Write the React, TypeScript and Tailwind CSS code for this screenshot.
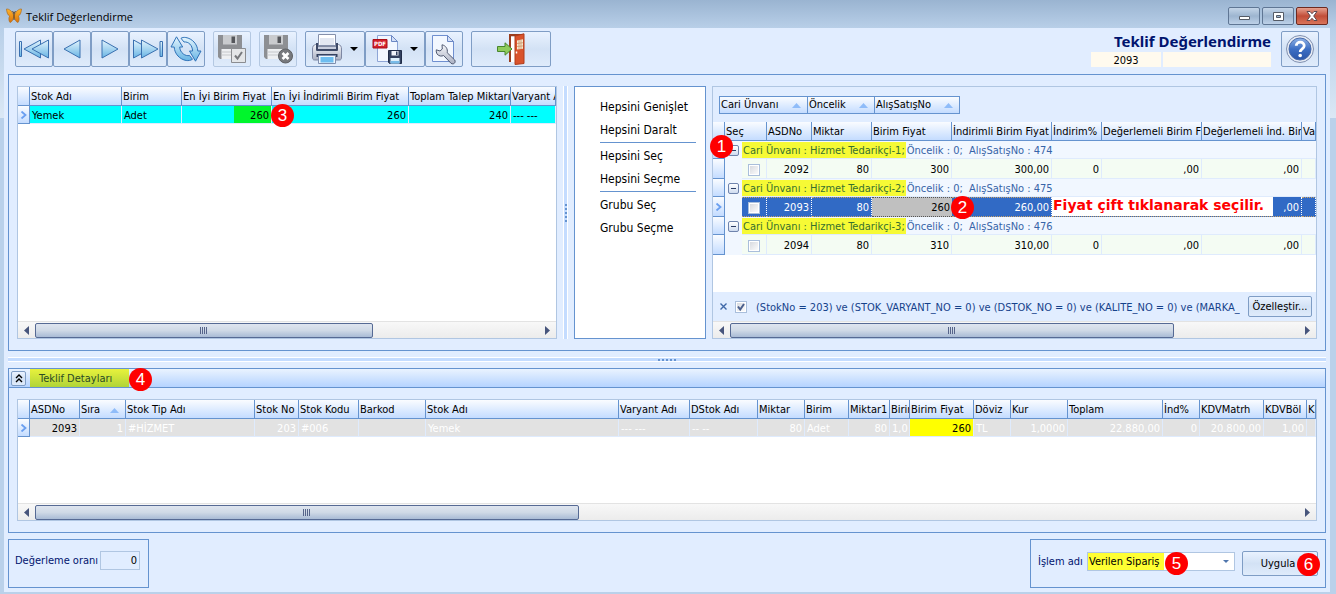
import { useState } from 'react'
import type { ReactNode } from 'react'
import clsx from 'clsx'

const BUTTON = 'border border-[#7f9dc5] rounded-xs bg-linear-to-b from-[#e9f2ff] via-[#d3e2f5] via-50% to-[#dfebfb]'
const HEAD = 'bg-linear-to-b from-[#fafcff] to-[#c4dcff]'

function Badge({ children, className }: { children: ReactNode; className: string }) {
  return (
    <span
      className={clsx(
        'absolute z-10 flex size-[23px] items-center justify-center rounded-full bg-[#fe0000] font-[Liberation_Sans,sans-serif] text-[17px] leading-none text-white',
        className,
      )}
    >
      {children}
    </span>
  )
}

/* ---------- icons ---------- */

function Gradients() {
  return (
    <svg className="absolute size-0" aria-hidden="true">
      <defs>
        <linearGradient id="sky" x1="0" y1="0" x2="0" y2="1">
          <stop offset="0" stopColor="#e4f5fd" />
          <stop offset="1" stopColor="#67b4e4" />
        </linearGradient>
        <linearGradient id="steel" x1="0" y1="0" x2="0" y2="1">
          <stop offset="0" stopColor="#f5f6fa" />
          <stop offset="1" stopColor="#aab0c2" />
        </linearGradient>
        <linearGradient id="ball" x1="0" y1="0" x2="0" y2="1">
          <stop offset="0" stopColor="#8fb2e6" />
          <stop offset="0.5" stopColor="#3d6fc4" />
          <stop offset="1" stopColor="#2a55a8" />
        </linearGradient>
        <linearGradient id="wing" x1="0" y1="0" x2="0" y2="1">
          <stop offset="0" stopColor="#ffb52e" />
          <stop offset="1" stopColor="#d9730b" />
        </linearGradient>
      </defs>
    </svg>
  )
}

function ButterflyIcon() {
  return (
    <svg width="16" height="16" viewBox="0 0 16 16">
      <path d="M7.6 7C6 3 3 .8.5 1c.2 3 1 6 3.2 7.2C2.500 9.500 2.600 13 4 14.500 6 14 7.300 11.500 7.700 9z" fill="url(#wing)" stroke="#a8620f" strokeWidth=".6" />
      <path d="M8.400 7C10 3 13 .8 15.500 1c-.2 3-1 6-3.200 7.200C13.500 9.500 13.400 13 12 14.500 10 14 8.700 11.500 8.300 9z" fill="url(#wing)" stroke="#a8620f" strokeWidth=".6" />
      <path d="M8 5v7M8 5.500L6.500 3M8 5.500L9.500 3" stroke="#5a3a18" fill="none" strokeWidth=".9" />
    </svg>
  )
}

function FirstIcon() {
  return (
    <svg width="30" height="20" viewBox="0 0 30 20" fill="url(#sky)" stroke="#3a70b0">
      <path d="M.5 2.500h2v15h-2z" />
      <path d="M21.500 1v18L5 10z" />
      <path d="M29.500 1v18L13 10z" />
    </svg>
  )
}

function PrevIcon() {
  return (
    <svg width="18" height="20" viewBox="0 0 18 20">
      <path d="M17 1v18L1 10z" fill="url(#sky)" stroke="#3a70b0" />
    </svg>
  )
}

function NextIcon() {
  return (
    <svg width="18" height="20" viewBox="0 0 18 20">
      <path d="M1 1v18l16-9z" fill="url(#sky)" stroke="#3a70b0" />
    </svg>
  )
}

function LastIcon() {
  return (
    <svg width="30" height="20" viewBox="0 0 30 20" fill="url(#sky)" stroke="#3a70b0">
      <path d="M.5 1v18L17 10z" />
      <path d="M8.500 1v18L25 10z" />
      <path d="M27 2.500h2.500v15H27z" />
    </svg>
  )
}

function RefreshIcon() {
  return (
    <svg width="32" height="26" viewBox="0 0 32 26" fill="url(#sky)" stroke="#2f72b8" strokeLinejoin="round">
      <path d="M6.500.8L1 11h3.200c.3 7 5.800 12.500 12 13.500 2.200.3 4.300 0 6.300-1.200l-3-3.800c-4 1-9.500-2.500-9.800-8.500h3z" />
      <path d="M25.500 25.200L31 15h-3.200C27.500 8 22 2.500 15.800 1.500c-2.200-.3-3.300 0-4.800.8l3 3.700c4.500-.5 8.300 3 8.600 9h-3.100z" />
    </svg>
  )
}

function Disk({ badge }: { badge: 'check' | 'cross' }) {
  return (
    <svg width="30" height="30" viewBox="0 0 30 30">
      <path d="M1 1h24v24H3l-2-2z" fill="#8d8f93" />
      <path d="M6 1h14v9.500H6z" fill="#c9cbce" />
      <path d="M14.500 2.500h3.500v6.500h-3.500z" fill="#54565b" />
      <path d="M4.500 15h17v10h-17z" fill="#eef0f2" />
      <path d="M4.500 18h17M4.500 21h17" stroke="#c6c8cb" />
      {badge === 'check' ? (
        <>
          <path d="M14.500 14.500h14v14h-14z" fill="#e4e6e8" stroke="#8b8d91" />
          <path d="M18 21.500l2.500 3 4.500-6.500" fill="none" stroke="#77797d" strokeWidth="2" />
        </>
      ) : (
        <>
          <circle cx="22.500" cy="22" r="7" fill="#77797d" stroke="#5d5f63" />
          <path d="M19.500 19l6 6m0-6l-6 6" stroke="#fff" strokeWidth="2.600" />
        </>
      )}
    </svg>
  )
}

function PrinterIcon() {
  return (
    <svg width="30" height="31" viewBox="0 0 30 31">
      <path d="M3.500 10.500c-2 .5-3 2-3 4.500v8c0 2 .5 3 2 3h25c1.500 0 2-1 2-3v-8c0-2.500-1-4-3-4.500z" fill="url(#steel)" stroke="#7d87a3" />
      <path d="M4 9h22v6.500c0 1-.5 1.500-1.500 1.500h-19C4.500 17 4 16.500 4 15.500z" fill="#3d4966" />
      <path d="M6.500.5h17v11h-17z" fill="#fff" stroke="#8590ab" />
      <path d="M8 4h14v7H8z" fill="#e3e8f2" />
      <path d="M6 12.500h18V15H6z" fill="#c8cede" />
      <path d="M4.500 20h21v3h-21z" fill="#35425f" />
      <path d="M6.500 21.500h17v8h-17z" fill="#eef7fd" stroke="#7f8eae" />
      <path d="M8.500 23h13v5.500h-13z" fill="#6dbdf0" />
    </svg>
  )
}

function PdfIcon() {
  return (
    <svg width="30" height="31" viewBox="0 0 30 31">
      <path d="M5.500 1.500h14l6 6v20h-20z" fill="#f2f7ff" stroke="#8ea5d6" />
      <path d="M19.500 1.500v6h6z" fill="#d4e0f7" stroke="#6c88c4" />
      <path d="M1 5.500h14v8.500H1z" fill="#d3202a" stroke="#a90f18" />
      <text x="8" y="12" textAnchor="middle" fontFamily="DejaVu Sans Condensed, sans-serif" fontSize="6" fontWeight="700" fill="#fff">PDF</text>
      <path d="M16.500 16.500h13v13h-12l-1-1z" fill="#33415f" stroke="#202c48" />
      <path d="M19.500 17h7v4.500h-7z" fill="#f1f4fa" />
      <path d="M24 17.500h1.500V21H24z" fill="#33415f" />
      <path d="M18.500 24h9v5.500h-9z" fill="#ddf0fc" />
      <path d="M18.500 27h9v2.500h-9z" fill="#78bbe8" />
    </svg>
  )
}

function ServiceIcon() {
  return (
    <svg width="26" height="31" viewBox="0 0 26 31">
      <path d="M1.500 1.500h15l6 6v20h-21z" fill="#f2f7ff" stroke="#6f8fd0" />
      <path d="M16.500 1.500v6h6z" fill="#d4e0f7" stroke="#6c88c4" />
      <path
        d="M11 10.800l.3 4.200-2.300 2-3.700-1.200c-.5 3 1 5.700 4 6.200 1.200.2 2.300 0 3.300-.5l7.400 7.800c2.500 1.700 5.200-.8 3.700-3.300l-7.500-7.300c.8-3.800-1.500-7.200-5.200-7.900z"
        fill="url(#steel)"
        stroke="#4f5870"
      />
    </svg>
  )
}

function DoorIcon() {
  return (
    <svg width="30" height="32" viewBox="0 0 30 32">
      <path d="M13 1h14v2.500H15V29h-2z" fill="#9a3d1e" />
      <path d="M15 3.500h9V29h-9z" fill="#fff" />
      <path d="M19 3L28 .8v29.700L19 31.500z" fill="#d9532c" stroke="#b03c1b" />
      <path d="M21 7.500l6-1.200v9.500l-6 .7z" fill="#f5ead0" />
      <path d="M23 7v9.500M25 6.500V16M21 10.500l6-.8M21 13.500l6-.6" stroke="#c98a5c" strokeWidth=".7" />
      <path d="M1.500 13.500H9V9.800l7 6.200-7 6.200v-3.700H1.500z" fill="#8fcb5b" stroke="#47862c" />
      <path d="M20.500 18.500v2" stroke="#fff" strokeWidth="1.500" />
    </svg>
  )
}

function HelpIcon() {
  return (
    <svg width="30" height="30" viewBox="0 0 30 30">
      <circle cx="15" cy="15" r="13.500" fill="#e6ebf4" stroke="#8090b0" />
      <circle cx="15" cy="15" r="11" fill="url(#ball)" stroke="#4a6cab" />
      <path d="M11.200 11.800c.2-5 8.300-4.700 8 .2-.2 2.800-4 3-4 6" fill="none" stroke="#fff" strokeWidth="2.800" />
      <circle cx="15.200" cy="21.500" r="1.800" fill="#fff" />
    </svg>
  )
}

function RowMarker() {
  return (
    <svg width="8" height="8" viewBox="0 0 8 8" className="mx-auto block">
      <path d="M1.500.5L5.500 4l-4 3.500" fill="none" stroke="#6a9ff0" strokeWidth="1.800" />
    </svg>
  )
}

function SortMark() {
  return (
    <svg width="9" height="5" viewBox="0 0 9 5" className="shrink-0">
      <path d="M4.500 0L9 5H0z" fill="#8fbcf9" />
    </svg>
  )
}

function DropArrow() {
  return (
    <svg width="8" height="4" viewBox="0 0 8 4">
      <path d="M0 0h8L4 4z" fill="#000" />
    </svg>
  )
}

/* ---------- shared parts ---------- */

function ToolButton({ label, wide, disabled, children }: { label: string; wide?: string; disabled?: boolean; children: ReactNode }) {
  return (
    <button
      type="button"
      aria-label={label}
      disabled={disabled}
      className={clsx(
        'flex h-9 items-center justify-center rounded-xs border bg-linear-to-b from-[#e9f2ff] via-[#d3e2f5] via-50% to-[#dfebfb]',
        disabled ? 'border-[#b4c8e2]' : 'border-[#7f9dc5]',
        wide ?? 'w-[38px]',
      )}
    >
      {children}
    </button>
  )
}

function ScrollBar({ thumb }: { thumb: string }) {
  return (
    <div className="flex h-[17px] shrink-0 items-center border-t border-[#e3e3e3] bg-linear-to-b from-[#f8f8f8] to-[#ececec]">
      <button type="button" aria-label="Sola kaydır" className="flex w-[17px] shrink-0 justify-center">
        <svg width="5" height="9" viewBox="0 0 5 9"><path d="M5 0v9L0 4.500z" fill="#47557c" /></svg>
      </button>
      <div className="grow">
        <div
          className={clsx(
            'flex h-[15px] items-center justify-center gap-px rounded-xs border border-[#566a94] bg-linear-to-b from-[#dfe5ef] via-[#cfd9e6] via-50% to-[#a9bbd5]',
            thumb,
          )}
        >
          {[0, 1, 2, 3].map((i) => (
            <span key={i} className="h-[7px] w-px bg-[#56648a]" />
          ))}
        </div>
      </div>
      <button type="button" aria-label="Sağa kaydır" className="flex w-[17px] shrink-0 justify-center">
        <svg width="5" height="9" viewBox="0 0 5 9"><path d="M0 0v9l5-4.500z" fill="#47557c" /></svg>
      </button>
    </div>
  )
}

function Th({ children, sorted, span }: { children?: ReactNode; sorted?: boolean; span?: number }) {
  return (
    <th
      colSpan={span}
      className={clsx('h-[19px] overflow-hidden border-r border-b border-[#6593cf] p-0 pt-[2px] pl-px text-left font-normal whitespace-nowrap', HEAD)}
    >
      {sorted ? (
        <span className="flex items-center justify-between pr-[6px]">
          {children}
          <SortMark />
        </span>
      ) : (
        children
      )}
    </th>
  )
}

function Marker({ active }: { active?: boolean }) {
  return (
    <td className={clsx('border-r border-b border-[#6593cf] p-0', HEAD)}>{active && <RowMarker />}</td>
  )
}

function Columns({ widths }: { widths: string[] }) {
  return (
    <colgroup>
      {widths.map((w, i) => (
        <col key={i} className={w} />
      ))}
      <col />
    </colgroup>
  )
}

const TABLE = 'w-full table-fixed border-separate border-spacing-0'
const CELL = 'overflow-hidden border-r border-b border-[#dfebfd] px-[2px] pt-[2px] pb-0 whitespace-nowrap'

/* ---------- demand grid ---------- */

function DemandGrid() {
  const widths = ['w-[12px]', 'w-[92px]', 'w-[60px]', 'w-[90px]', 'w-[137px]', 'w-[102px]']
  return (
    <div className="relative flex w-[540px] shrink-0 flex-col border border-[#b0c6e2] bg-white">
      <div className="grow overflow-hidden">
        <table className={TABLE}>
          <Columns widths={widths} />
          <thead>
            <tr>
              <Th />
              <Th>Stok Adı</Th>
              <Th>Birim</Th>
              <Th>En İyi Birim Fiyat</Th>
              <Th>En İyi İndirimli Birim Fiyat</Th>
              <Th>Toplam Talep Miktarı</Th>
              <Th>Varyant Adı</Th>
            </tr>
          </thead>
          <tbody>
            <tr className="h-[18px] bg-[#00ffff]">
              <Marker active />
              <td className={CELL}>Yemek</td>
              <td className={CELL}>Adet</td>
              <td className={clsx(CELL, 'bg-linear-to-r from-[#00ffff] from-58% to-[#00f62c] to-58% text-right')}>260</td>
              <td className={clsx(CELL, 'text-right')}>260</td>
              <td className={clsx(CELL, 'text-right')}>240</td>
              <td className={CELL}>--- ---</td>
            </tr>
          </tbody>
        </table>
      </div>
      <ScrollBar thumb="w-[67%]" />
      <Badge className="top-[17px] left-[253px]">3</Badge>
    </div>
  )
}

/* ---------- selection menu ---------- */

function SelectionMenu() {
  const groups = [
    ['Hepsini Genişlet', 'Hepsini Daralt'],
    ['Hepsini Seç', 'Hepsini Seçme'],
    ['Grubu Seç', 'Grubu Seçme'],
  ]
  return (
    <nav className="mr-[6px] ml-[6px] flex w-[132px] shrink-0 flex-col border border-[#6593cf] bg-white pt-[8px] pr-[9px] pl-[25px] text-[12px]">
      {groups.map((items, i) => (
        <div key={items[0]} className={clsx('flex flex-col pb-px', i < 2 && 'mb-px border-b border-[#6593cf]')}>
          {items.map((item) => (
            <button key={item} type="button" className="h-[23px] text-left whitespace-nowrap">
              {item}
            </button>
          ))}
        </div>
      ))}
    </nav>
  )
}

/* ---------- offer grid ---------- */

const offers = [
  { firm: 'Hizmet Tedarikçi-1', no: 474, asd: 2092, price: '300', net: '300,00' },
  { firm: 'Hizmet Tedarikçi-2', no: 475, asd: 2093, price: '260', net: '260,00' },
  { firm: 'Hizmet Tedarikçi-3', no: 476, asd: 2094, price: '310', net: '310,00' },
]

function OfferRows({ offer, selected }: { offer: (typeof offers)[number]; selected: boolean }) {
  const [checked, setChecked] = useState(false)
  const tone = selected
    ? 'border-t border-dotted border-r-white border-y-[#c9a36a] bg-[#316ac5] text-white'
    : 'border-[#dfebfd] bg-[#f4fcf3]'
  const cell = clsx('overflow-hidden border-r border-b px-[2px] pt-[2px] pb-0 text-right whitespace-nowrap', tone)
  return (
    <>
      <tr className="h-[18px]">
        <Marker />
        <td className="bg-[#f1f7ff] p-0">
          <button
            type="button"
            aria-label="Grubu daralt"
            className="ml-[3px] flex size-[11px] items-center justify-center rounded-xs border border-[#6f84ad] bg-linear-to-b from-white to-[#cfdcf0]"
          >
            <span className="h-px w-[5px] bg-[#2b3c63]" />
          </button>
        </td>
        <td colSpan={9} className="border-b border-[#dfebfd] bg-[#f1f7ff] p-0 whitespace-nowrap text-[#3764a8]">
          <span className="inline-block h-[16px] bg-[#f6fa35] pr-px pl-px leading-[18px] text-[#36702f]">Cari Ünvanı : {offer.firm};</span>
          <span className="ml-px">Öncelik : 0;&nbsp; AlışSatışNo : {offer.no}</span>
        </td>
      </tr>
      <tr className="h-[20px]">
        <Marker active={selected} />
        <td className="bg-[#f1f7ff] p-0" />
        <td className={cell}>
          <input
            type="checkbox"
            aria-label={`Seç ${offer.asd}`}
            checked={checked}
            onChange={(e) => setChecked(e.target.checked)}
            className="mx-auto block size-[12px] appearance-none border border-[#a9bedb] bg-linear-to-br from-[#d4d6dc] to-white ring-1 ring-white ring-inset checked:bg-[#316ac5]"
          />
        </td>
        <td className={cell}>{offer.asd}</td>
        <td className={cell}>80</td>
        <td className={selected ? 'border-y border-dotted border-[#555] bg-[#c0c0c0] px-[2px] pt-[2px] pb-0 text-right' : cell}>{offer.price}</td>
        <td className={cell}>{offer.net}</td>
        {selected ? (
          <td colSpan={3} className="border-r border-b border-dotted border-r-white border-b-[#c9a36a] bg-[#316ac5] p-0 pr-[2px] text-white">
            <div className="flex h-[19px] items-center justify-between">
              <strong className="h-full w-[221px] bg-white pl-px font-[DejaVu_Sans,sans-serif] text-[14px] leading-[16px] font-bold whitespace-nowrap text-[#f00]">
                Fiyat çift tıklanarak seçilir.
              </strong>
              <span className="pt-[2px]">,00</span>
            </div>
          </td>
        ) : (
          <>
            <td className={cell}>0</td>
            <td className={cell}>,00</td>
            <td className={cell}>,00</td>
          </>
        )}
        <td className={cell} />
      </tr>
    </>
  )
}

function OfferGrid() {
  const widths = ['w-[12px]', 'w-[17px]', 'w-[25px]', 'w-[45px]', 'w-[60px]', 'w-[80px]', 'w-[100px]', 'w-[50px]', 'w-[100px]', 'w-[100px]']
  return (
    <div className="relative min-w-0 grow basis-0">
      <div className="flex h-full flex-col border border-[#b0c6e2] bg-white">
        <div className="flex h-[35px] shrink-0 items-center bg-[#e1edff] pl-[6px]">
          <div className="flex border border-[#6593cf]">
            <button type="button" className={clsx('flex h-[16px] w-[88px] items-center justify-between border-r border-[#6593cf] pt-px pr-[6px] pl-px', HEAD)}>Cari Ünvanı <SortMark /></button>
            <button type="button" className={clsx('flex h-[16px] w-[67px] items-center justify-between border-r border-[#6593cf] pt-px pr-[6px] pl-px', HEAD)}>Öncelik <SortMark /></button>
            <button type="button" className={clsx('flex h-[16px] w-[84px] items-center justify-between pt-px pr-[6px] pl-px', HEAD)}>AlışSatışNo <SortMark /></button>
          </div>
        </div>
        <div className="grow overflow-hidden">
          <table className={TABLE}>
            <Columns widths={widths} />
            <thead>
              <tr>
                <Th />
                <Th span={2}>Seç</Th>
                <Th>ASDNo</Th>
                <Th>Miktar</Th>
                <Th>Birim Fiyat</Th>
                <Th>İndirimli Birim Fiyat</Th>
                <Th>İndirim%</Th>
                <Th>Değerlemeli Birim Fiy</Th>
                <Th>Değerlemeli İnd. Biri</Th>
                <Th>Va</Th>
              </tr>
            </thead>
            <tbody>
              {offers.map((offer) => (
                <OfferRows key={offer.asd} offer={offer} selected={offer.asd === 2093} />
              ))}
            </tbody>
          </table>
        </div>
        <div className="flex h-[29px] shrink-0 items-center bg-[#e1edff] pr-[4px] pl-[6px] text-[#15428b]">
          <button type="button" aria-label="Filtreyi kapat" className="shrink-0">
            <svg width="9" height="9" viewBox="0 0 9 9"><path d="M1.500 1.500l6 6m0-6l-6 6" stroke="#3f68a8" strokeWidth="1.400" /></svg>
          </button>
          <label className="ml-[7px] flex min-w-0 grow items-center">
            <span className="relative flex shrink-0">
              <input type="checkbox" defaultChecked className="peer size-[12px] appearance-none border border-[#a9bedb] bg-linear-to-br from-[#d4d6dc] to-white ring-1 ring-white ring-inset" />
              <svg width="12" height="12" viewBox="0 0 12 12" className="pointer-events-none absolute inset-0 hidden peer-checked:block">
                <path d="M3 5.500l2.200 3L9 3" fill="none" stroke="#4b5f8c" strokeWidth="2" />
              </svg>
            </span>
            <span className="ml-[9px] overflow-hidden pt-[2px] whitespace-nowrap">
              (StokNo = 203) ve (STOK_VARYANT_NO = 0) ve (DSTOK_NO = 0) ve (KALITE_NO = 0) ve (MARKA_
            </span>
          </label>
          <button type="button" className={clsx('ml-2 h-[21px] w-[64px] shrink-0 whitespace-nowrap text-black', BUTTON)}>
            Özelleştir...
          </button>
        </div>
        <ScrollBar thumb="w-[78%]" />
      </div>
      <Badge className="top-[49px] left-[-2px]">1</Badge>
      <Badge className="top-[110px] left-[239px]">2</Badge>
    </div>
  )
}

/* ---------- detail grid ---------- */

const detailColumns = [
  { title: 'ASDNo', value: '2093', right: true, width: 'w-[50px]', tone: 'text-black' },
  { title: 'Sıra', value: '1', right: true, width: 'w-[46px]' },
  { title: 'Stok Tip Adı', value: '#HİZMET', width: 'w-[129px]' },
  { title: 'Stok No', value: '203', right: true, width: 'w-[44px]' },
  { title: 'Stok Kodu', value: '#006', width: 'w-[60px]' },
  { title: 'Barkod', value: '', width: 'w-[67px]' },
  { title: 'Stok Adı', value: 'Yemek', width: 'w-[193px]' },
  { title: 'Varyant Adı', value: '--- ---', width: 'w-[71px]' },
  { title: 'DStok Adı', value: '-- --', width: 'w-[68px]' },
  { title: 'Miktar', value: '80', right: true, width: 'w-[47px]' },
  { title: 'Birim', value: 'Adet', width: 'w-[44px]' },
  { title: 'Miktar1', value: '80', right: true, width: 'w-[41px]' },
  { title: 'Birim', value: '1,0', width: 'w-[20px]' },
  { title: 'Birim Fiyat', value: '260', right: true, width: 'w-[64px]', tone: 'bg-[#ffff00] text-black' },
  { title: 'Döviz', value: 'TL', width: 'w-[37px]' },
  { title: 'Kur', value: '1,0000', right: true, width: 'w-[57px]' },
  { title: 'Toplam', value: '22.880,00', right: true, width: 'w-[95px]' },
  { title: 'İnd%', value: '0', right: true, width: 'w-[37px]' },
  { title: 'KDVMatrh', value: '20.800,00', right: true, width: 'w-[64px]' },
  { title: 'KDVBöl', value: '1,00', right: true, width: 'w-[43px]' },
]

function DetailPanel() {
  return (
    <section className="relative mt-[6px] border border-[#6593cf]">
      <header className="flex h-[19px] items-center border-b border-[#6593cf] bg-linear-to-b from-[#eaf3ff] to-[#b5d3ff] pl-[2px]">
        <button type="button" aria-label="Detayları gizle" className={clsx('flex size-[15px] items-center justify-center', BUTTON)}>
          <svg width="8" height="9" viewBox="0 0 8 9"><path d="M1 4l3-3 3 3M1 8l3-3 3 3" fill="none" stroke="#000" strokeWidth="1.400" /></svg>
        </button>
        <h2 className="ml-[4px] flex h-full w-[99px] items-center bg-linear-to-b from-[#e8f23c] to-[#b0d438] pt-px pl-[9px] text-[#2c4a25]">Teklif Detayları</h2>
      </header>
      <div className="mx-[8px] mt-[11px] mb-[11px] flex flex-col border border-[#b0c6e2] bg-white">
        <div className="h-[103px] overflow-hidden">
          <table className={TABLE}>
            <Columns widths={['w-[12px]', ...detailColumns.map((c) => c.width)]} />
            <thead>
              <tr>
                <Th />
                {detailColumns.map((c, i) => (
                  <Th key={i} sorted={c.title === 'Sıra'}>{c.title}</Th>
                ))}
                <Th>KDV</Th>
              </tr>
            </thead>
            <tbody>
              <tr className="h-[18px] bg-[#e2e2e2]">
                <Marker active />
                {detailColumns.map((c, i) => (
                  <td key={i} className={clsx(CELL, c.right && 'text-right', c.tone ?? 'text-white')}>{c.value}</td>
                ))}
                <td className={CELL} />
              </tr>
            </tbody>
          </table>
        </div>
        <ScrollBar thumb="w-[43%]" />
      </div>
      <Badge className="-top-px left-[120px]">4</Badge>
    </section>
  )
}

/* ---------- window ---------- */

const CAPTION = 'flex h-[18px] w-[32px] items-center justify-center rounded-xs border'

function TitleBar() {
  return (
    <header className="flex h-[28px] shrink-0 items-center pt-[4px] pr-[8px] pl-[6px]">
      <ButterflyIcon />
      <h1 className="ml-[4px] grow pt-px font-[Open_Sans,sans-serif] text-[11px] text-black">Teklif Değerlendirme</h1>
      <div className="flex gap-[2px]">
        <button type="button" aria-label="Küçült" className={clsx(CAPTION, 'border-[#5f7694] bg-linear-to-b from-[#c4d5e8] via-[#9db5d0] via-50% to-[#bdd1e8]')}>
          <svg width="11" height="10" viewBox="0 0 11 10"><path d="M.5 5.500h10v3H.5z" fill="#fff" stroke="#555b66" /></svg>
        </button>
        <button type="button" aria-label="Ekranı kapla" className={clsx(CAPTION, 'border-[#5f7694] bg-linear-to-b from-[#c4d5e8] via-[#9db5d0] via-50% to-[#bdd1e8]')}>
          <svg width="11" height="9" viewBox="0 0 11 9"><path d="M.5.5h10v8H.5z" fill="#fff" stroke="#555b66" /><path d="M3.500 3.500h4v2h-4z" fill="#9db5d0" stroke="#555b66" /></svg>
        </button>
        <button type="button" aria-label="Kapat" className={clsx(CAPTION, 'border-[#6d2a20] bg-linear-to-b from-[#e5a08f] via-[#c14d38] via-50% to-[#d9745a]')}>
          <svg width="12" height="10" viewBox="0 0 12 10">
            <path d="M1 .5h3l2 2.200L8 .5h3L7.700 5 11 9.500H8L6 7.300 4 9.500H1L4.300 5z" fill="#fff" stroke="#5b4a52" />
          </svg>
        </button>
      </div>
    </header>
  )
}

function ToolBar() {
  return (
    <div className="flex h-[46px] shrink-0 items-start pt-[3px] pr-[7px] pl-[7px]">
      <ToolButton label="İlk kayıt"><FirstIcon /></ToolButton>
      <ToolButton label="Önceki kayıt"><PrevIcon /></ToolButton>
      <ToolButton label="Sonraki kayıt"><NextIcon /></ToolButton>
      <ToolButton label="Son kayıt"><LastIcon /></ToolButton>
      <ToolButton label="Yenile"><RefreshIcon /></ToolButton>
      <div className="ml-2 flex gap-2">
        <ToolButton label="Kaydet" disabled><Disk badge="check" /></ToolButton>
        <ToolButton label="Vazgeç" disabled><Disk badge="cross" /></ToolButton>
      </div>
      <div className="ml-2 flex">
        <ToolButton label="Yazdır" wide="w-[60px] gap-2"><PrinterIcon /><DropArrow /></ToolButton>
        <ToolButton label="PDF kaydet" wide="w-[60px] gap-2"><PdfIcon /><DropArrow /></ToolButton>
        <ToolButton label="Ayarlar"><ServiceIcon /></ToolButton>
      </div>
      <div className="ml-2">
        <ToolButton label="Çıkış" wide="w-[80px]"><DoorIcon /></ToolButton>
      </div>
      <div className="ml-auto flex w-[180px] flex-col">
        <strong className="text-right font-[Noto_Sans,sans-serif] text-[15px] leading-[21px] font-bold whitespace-nowrap text-[#00146e]">
          Teklif Değerlendirme
        </strong>
        <div className="flex gap-[2px]">
          <input aria-label="Belge no" defaultValue="2093" className="h-[15px] w-[70px] bg-[#fffaee] pt-px text-center" />
          <input aria-label="Açıklama" className="h-[15px] min-w-0 grow bg-[#fffaee]" />
        </div>
      </div>
      <div className="ml-[10px]">
        <ToolButton label="Yardım"><HelpIcon /></ToolButton>
      </div>
    </div>
  )
}

function Footer() {
  return (
    <footer className="mt-[6px] flex justify-between">
      <div className="flex h-[49px] w-[141px] items-start border border-[#6593cf] pt-[11px] pl-[6px]">
        <label htmlFor="ratio" className="w-[85px] pt-[3px] whitespace-nowrap text-[#00146e]">Değerleme oranı</label>
        <input id="ratio" defaultValue="0" className="h-[19px] w-[40px] border border-[#b0c6e2] bg-[#e1edff] px-[2px] text-right" />
      </div>
      <div className="relative flex h-[49px] w-[296px] items-start border border-[#6593cf] pt-[11px] pl-[7px]">
        <label htmlFor="action" className="w-[49px] pt-[4px] whitespace-nowrap text-[#00146e]">İşlem adı</label>
        <div className="relative mt-px">
          <select id="action" className="h-[19px] w-[148px] appearance-none border border-[#b0c6e2] bg-linear-to-r from-[#ffff33] from-52% to-white to-52% pt-px pl-px">
            <option>Verilen Sipariş</option>
          </select>
          <svg width="6" height="3" viewBox="0 0 6 3" className="pointer-events-none absolute top-[8px] right-[6px]"><path d="M0 0h6L3 3z" fill="#5076ad" /></svg>
        </div>
        <button type="button" className={clsx('ml-[7px] h-[25px] w-[76px] pr-[4px]', BUTTON)}>Uygula</button>
        <Badge className="top-[12px] left-[134px]">5</Badge>
        <Badge className="top-[13px] left-[266px]">6</Badge>
      </div>
    </footer>
  )
}

export default function App() {
  return (
    <div className="flex min-h-screen flex-col bg-[linear-gradient(to_bottom,#9ab4d1_0px,#b8cfe8_28px,#dbe8f5_118px,#bad1ea_118px)] font-[DejaVu_Sans_Condensed,DejaVu_Sans,sans-serif] text-[11px] leading-[14px] text-black">
      <Gradients />
      <TitleBar />
      <main className="mr-[6px] mb-[2px] ml-[4px] flex grow flex-col bg-[#e1edff] px-[4px] pb-[4px]">
        <ToolBar />
        <section className="flex grow border border-[#6593cf] px-[8px] pt-[11px] pb-[11px]">
          <DemandGrid />
          <div className="ml-[6px] flex w-[5px] shrink-0 items-center justify-center border-x border-white bg-[#c4dcff]">
            <div className="h-[18px] border-l-2 border-dotted border-[#6593cf]" />
          </div>
          <SelectionMenu />
          <OfferGrid />
        </section>
        <div className="mt-[6px] flex h-[5px] shrink-0 items-center justify-center border-y border-white bg-[#c4dcff]">
          <div className="w-[18px] border-t-2 border-dotted border-[#6593cf]" />
        </div>
        <DetailPanel />
        <Footer />
      </main>
    </div>
  )
}
